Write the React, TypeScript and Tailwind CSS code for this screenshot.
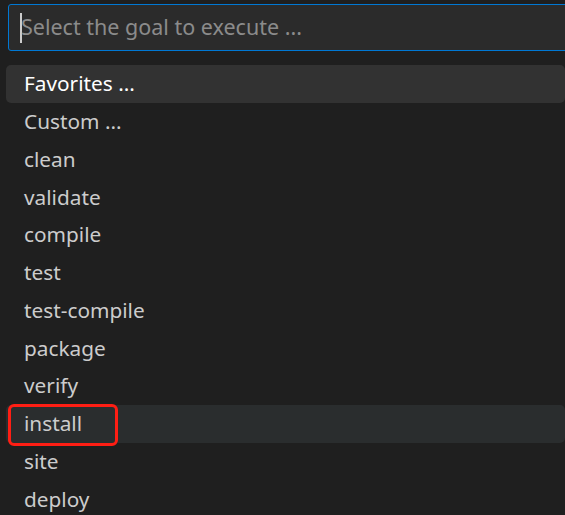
import React from 'react';

const goals = [
    'Favorites ...',
    'Custom ...',
    'clean',
    'validate',
    'compile',
    'test',
    'test-compile',
    'package',
    'verify',
    'install',
    'site',
    'deploy',
];

const GoalRow: React.FC<{ label: string; index: number }> = ({ label, index }) => {
    const selected = index === 0;
    const hovered = label === 'install';
    return (
        <div
            className={`relative h-[37.75px] flex items-center pl-[18px] rounded-[5px] ${
                selected ? 'bg-[#323232] text-white' : hovered ? 'bg-[#2a2d2e] text-[#cccccc]' : 'text-[#cccccc]'
            }`}
        >
            <span>{label}</span>
            {hovered && (
                <div className="absolute left-[2px] top-[-1px] w-[110px] h-[42px] border-[3px] border-[#ff1e14] rounded-[6px]" />
            )}
        </div>
    );
};

const App: React.FC = () => {
    return (
        <div
            className="w-[565px] h-[515px] bg-[#1f1f1f] overflow-hidden text-[20.8px]"
            style={{ fontFamily: '"Noto Sans", "Open Sans", sans-serif' }}
        >
            <div className="pt-[4px] pl-[8px]">
                <div className="h-[47px] w-[580px] bg-[#2b2b2b] border border-[#0078d4] rounded-[3px] flex items-center pl-[11px]">
                    <div className="w-[2px] h-[30px] bg-[#cccccc]" />
                    <span className="text-[#8b8b8b] -ml-[1px] text-[21.5px]">Select the goal to execute ...</span>
                </div>
            </div>
            <div className="mt-[14px] pl-[6px]">
                {goals.map((g, i) => (
                    <GoalRow key={g} label={g} index={i} />
                ))}
            </div>
        </div>
    );
};

export default App;
